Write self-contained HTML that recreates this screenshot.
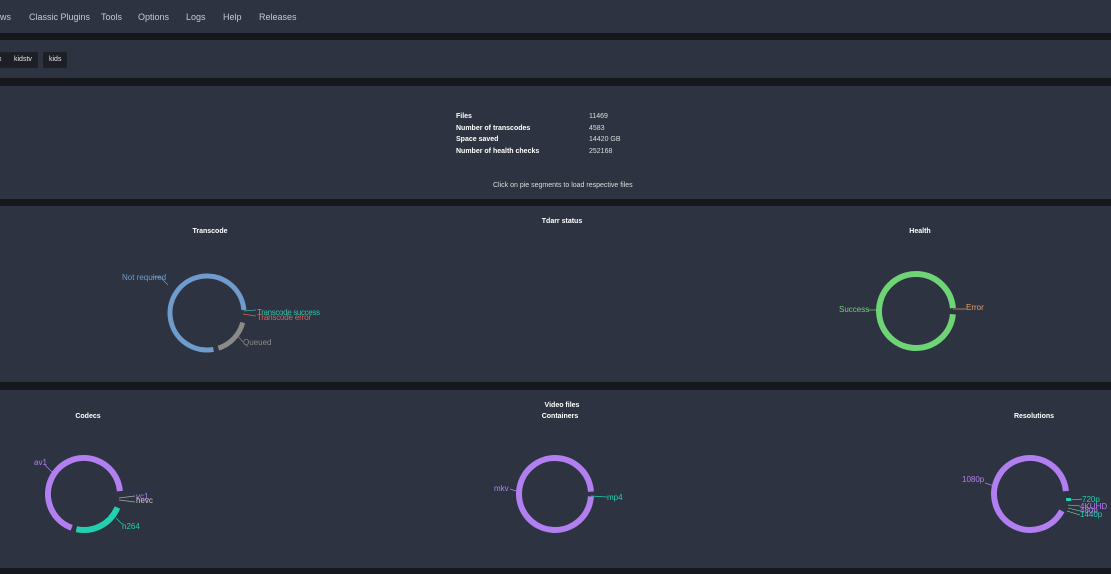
<!DOCTYPE html>
<html><head><meta charset="utf-8"><style>
html,body{margin:0;padding:0;width:1111px;height:574px;overflow:hidden;background:#16181d;font-family:"Liberation Sans",sans-serif;}
.p{position:absolute;left:0;width:1111px;background:#2d3340;}
.nav{color:#c5c9d2;font-size:9px;}
.nav span{position:absolute;top:12px;}
.btn{position:absolute;top:52px;height:16px;background:#1c1f25;color:#e6e6e6;font-size:7px;line-height:16px;padding:0 6px;border-radius:2px;}
.t{position:absolute;color:#fff;font-size:7px;font-weight:bold;}
.v{position:absolute;color:#ddd;font-size:7px;}
.h{position:absolute;color:#fff;font-size:7px;font-weight:bold;transform:translateX(-50%);}
svg text{font-family:"Liberation Sans",sans-serif;font-size:8px;}
</style></head><body>
<div class="p nav" style="top:0;height:33px;">
<span style="left:0">ws</span><span style="left:29px">Classic Plugins</span><span style="left:101px">Tools</span><span style="left:138px">Options</span><span style="left:186px">Logs</span><span style="left:223px">Help</span><span style="left:259px">Releases</span>
</div>
<div class="p" style="top:40px;height:38px;">
<div class="btn" style="top:12px;left:-8px;">x</div>
<div class="btn" style="top:12px;left:8px;">kidstv</div>
<div class="btn" style="top:12px;left:43px;">kids</div>
</div>
<div class="p" style="top:86px;height:113px;">
<div class="t" style="left:456px;top:27px">Files</div><div class="v" style="left:589px;top:27px">11469</div>
<div class="t" style="left:456px;top:39px">Number of transcodes</div><div class="v" style="left:589px;top:39px">4583</div>
<div class="t" style="left:456px;top:50px">Space saved</div><div class="v" style="left:589px;top:50px">14420 GB</div>
<div class="t" style="left:456px;top:62px">Number of health checks</div><div class="v" style="left:589px;top:62px">252168</div>
<div class="v" style="left:493px;top:96px">Click on pie segments to load respective files</div>
</div>
<div class="p" style="top:206px;height:176px;">
<div class="h" style="left:562px;top:12px">Tdarr status</div>
<div class="h" style="left:210px;top:22px">Transcode</div>
<div class="h" style="left:920px;top:22px">Health</div>
</div>
<div class="p" style="top:390px;height:178px;">
<div class="h" style="left:562px;top:12px">Video files</div>
<div class="h" style="left:88px;top:23px">Codecs</div>
<div class="h" style="left:560px;top:23px">Containers</div>
<div class="h" style="left:1034px;top:23px">Resolutions</div>
</div>
<svg width="1111" height="574" style="position:absolute;left:0;top:0" fill="none">
<g transform="translate(207,313)">
<circle r="37" stroke="#6f9ccd" stroke-width="5" stroke-dasharray="177.6 999" transform="rotate(80)"/>
<circle r="37" stroke="#8a8a8a" stroke-width="5" stroke-dasharray="36.8 999" transform="rotate(15)"/>
</g>
<path d="M168 285 L160 277 L152 277" stroke="#6f9ccd" stroke-width=".7"/>
<text x="122" y="280" fill="#6f9ccd">Not required</text>
<path d="M244 311 L256 310" stroke="#2ec4a8" stroke-width=".7"/><path d="M243 314 L256 316" stroke="#e0605a" stroke-width=".7"/>
<text x="257" y="315" fill="#2ec4a8" textLength="63">Transcode success</text>
<text x="257" y="320" fill="#e0605a" textLength="54">Transcode error</text>
<path d="M236 334 L243 342" stroke="#8a8a8a" stroke-width=".7"/>
<text x="243" y="345" fill="#8a8a8a">Queued</text>
<circle cx="916" cy="311" r="37" stroke="#6fd475" stroke-width="6" stroke-dasharray="226 999" transform="rotate(5 916 311)"/>
<path d="M877 310 L868 310" stroke="#6fd475" stroke-width=".7"/>
<text x="839" y="312" fill="#6fd475">Success</text>
<path d="M953 309 L966 309" stroke="#e8a060" stroke-width=".7"/>
<text x="966" y="310" fill="#e8a060">Error</text>
<g transform="translate(84,494)">
<circle r="36" stroke="#b27ff0" stroke-width="6" stroke-dasharray="153.9 999" transform="rotate(110)"/>
<circle r="36" stroke="#22d0b0" stroke-width="6" stroke-dasharray="50.3 999" transform="rotate(22)"/>
</g>
<path d="M52 472 L45 465" stroke="#b27ff0" stroke-width=".7"/>
<text x="34" y="465" fill="#b27ff0">av1</text>
<path d="M119 498 L135 496 M119 500 L135 502" stroke="#aaa" stroke-width=".7"/>
<text x="136" y="499" fill="#b27ff0">vc1</text><text x="136" y="503" fill="#ccc">hevc</text>
<path d="M116 518 L122 524" stroke="#22d0b0" stroke-width=".7"/>
<text x="122" y="529" fill="#22d0b0">h264</text>
<circle cx="555" cy="494" r="36" stroke="#b27ff0" stroke-width="6" stroke-dasharray="221 999" transform="rotate(4 555 494)"/>
<path d="M519 492 L510 489" stroke="#b27ff0" stroke-width=".7"/>
<text x="494" y="491" fill="#b27ff0">mkv</text>
<path d="M591 496 L607 497" stroke="#22d0b0" stroke-width=".7"/>
<text x="607" y="500" fill="#22d0b0">mp4</text>
<g transform="translate(1030,494)">
<circle r="36" stroke="#b27ff0" stroke-width="6" stroke-dasharray="205.4 999" transform="rotate(28)"/>
</g>
<rect x="1066" y="498" width="5" height="3" fill="#22d0b0"/>
<path d="M994 486 L985 483" stroke="#b27ff0" stroke-width=".7"/>
<text x="962" y="482" fill="#b27ff0">1080p</text>
<path d="M1071 500 L1082 499 M1068 505 L1080 506 M1068 508 L1080 511 M1067 511 L1080 515" stroke="#8fa" stroke-width=".5"/>
<text x="1082" y="502" fill="#22d0b0">720p</text>
<text x="1080" y="509" fill="#b27ff0">4KUHD</text>
<text x="1080" y="513" fill="#b27ff0">480p</text>
<text x="1080" y="517" fill="#22d0b0">1440p</text>
</svg>
</body></html>
